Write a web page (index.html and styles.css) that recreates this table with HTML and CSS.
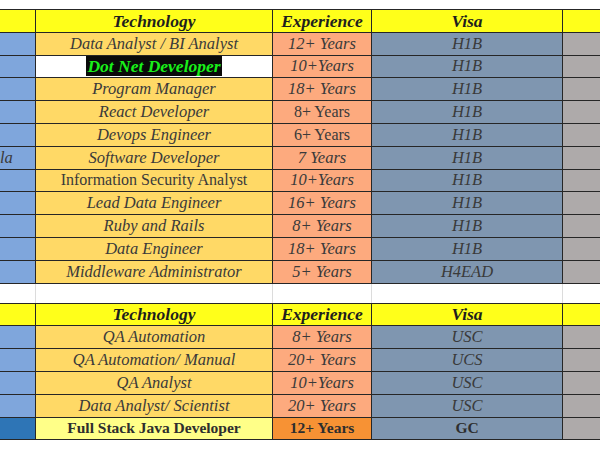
FILE: index.html
```html
<!DOCTYPE html>
<html>
<head>
<meta charset="utf-8">
<link rel="stylesheet" href="styles.css">
</head>
<body>
<div class="sheet">
<table class="grid">
  <colgroup>
    <col class="c-loc"><col class="c-tech"><col class="c-exp"><col class="c-visa"><col class="c-last">
  </colgroup>
  <tr class="head"><td></td><td>Technology</td><td>Experience</td><td>Visa</td><td></td></tr>
  <tr><td class="loc"></td><td class="tech">Data Analyst / BI Analyst</td><td class="exp">12+ Years</td><td class="visa">H1B</td><td class="last"></td></tr>
  <tr><td class="loc"></td><td class="tech white"><span class="hl">Dot Net Developer</span></td><td class="exp">10+Years</td><td class="visa">H1B</td><td class="last"></td></tr>
  <tr><td class="loc"></td><td class="tech">Program Manager</td><td class="exp">18+ Years</td><td class="visa">H1B</td><td class="last"></td></tr>
  <tr><td class="loc"></td><td class="tech">React Developer</td><td class="exp up">8+ Years</td><td class="visa">H1B</td><td class="last"></td></tr>
  <tr><td class="loc"></td><td class="tech">Devops Engineer</td><td class="exp up">6+ Years</td><td class="visa">H1B</td><td class="last"></td></tr>
  <tr><td class="loc"><span class="cut">la</span></td><td class="tech">Software Developer</td><td class="exp">7 Years</td><td class="visa">H1B</td><td class="last"></td></tr>
  <tr><td class="loc"></td><td class="tech up">Information Security Analyst</td><td class="exp">10+Years</td><td class="visa">H1B</td><td class="last"></td></tr>
  <tr><td class="loc"></td><td class="tech">Lead Data Engineer</td><td class="exp">16+ Years</td><td class="visa">H1B</td><td class="last"></td></tr>
  <tr><td class="loc"></td><td class="tech">Ruby and Rails</td><td class="exp">8+ Years</td><td class="visa">H1B</td><td class="last"></td></tr>
  <tr><td class="loc"></td><td class="tech">Data Engineer</td><td class="exp">18+ Years</td><td class="visa">H1B</td><td class="last"></td></tr>
  <tr><td class="loc"></td><td class="tech">Middleware Administrator</td><td class="exp">5+ Years</td><td class="visa">H4EAD</td><td class="last"></td></tr>
  <tr class="blank"><td></td><td></td><td></td><td></td><td></td></tr>
  <tr class="head"><td></td><td>Technology</td><td>Experience</td><td>Visa</td><td></td></tr>
  <tr><td class="loc"></td><td class="tech">QA Automation</td><td class="exp">8+ Years</td><td class="visa">USC</td><td class="last"></td></tr>
  <tr><td class="loc"></td><td class="tech">QA Automation/ Manual</td><td class="exp">20+ Years</td><td class="visa">UCS</td><td class="last"></td></tr>
  <tr><td class="loc"></td><td class="tech">QA Analyst</td><td class="exp">10+Years</td><td class="visa">USC</td><td class="last"></td></tr>
  <tr><td class="loc"></td><td class="tech">Data Analyst/ Scientist</td><td class="exp">20+ Years</td><td class="visa">USC</td><td class="last"></td></tr>
  <tr class="strong"><td class="loc dark"></td><td class="tech pale">Full Stack Java Developer</td><td class="exp hot">12+ Years</td><td class="visa">GC</td><td class="last"></td></tr>
</table>
</div>
</body>
</html>
```

FILE: styles.css
```css
html, body {
  margin: 0;
  padding: 0;
  background: #ffffff;
  overflow: hidden;
}
.sheet {
  width: 600px;
  height: 450px;
  overflow: hidden;
  padding-top: 9px;
  box-sizing: border-box;
}
.grid {
  border-collapse: collapse;
  table-layout: fixed;
  width: 622px;
  margin-left: -1px;
  border-top: 1px solid #c8c8c8;
  font-family: "Liberation Serif", serif;
  font-size: 16.5px;
  font-style: italic;
  color: #3a3a3a;
}
.c-loc { width: 36px; }
.c-tech { width: 237px; }
.c-exp { width: 99px; }
.c-visa { width: 191px; }
.c-last { width: 59px; }
.grid td {
  height: 21.8px;
  padding: 0;
  border: 1px solid #262626;
  text-align: center;
  vertical-align: middle;
  white-space: nowrap;
  line-height: 18px;
}
.head td {
  background: #ffff1a;
  font-weight: bold;
  font-size: 17.5px;
  color: #1e1e1e;
}
.blank td {
  height: 19px;
  background: #ffffff;
  border-top: 1px solid #262626;
  border-bottom: 1px solid #262626;
  border-left: 1px solid #dcdcdc;
  border-right: 1px solid #dcdcdc;
}
.loc { background: #7fa6dc; text-align: left !important; }
.tech { background: #ffd966; }
.exp { background: #fdaa7e; }
.visa { background: #7f96b0; }
.last { background: #aeaaaa; }
.up { font-style: normal; font-size: 16px; }
.white { background: #ffffff; }
.hl {
  background: #0a0a0a;
  color: #19f019;
  font-weight: bold;
  font-size: 17.5px;
  padding: 0 1px;
}
.cut {
  display: inline-block;
  margin-left: 0;
}
.strong td { font-style: normal; font-weight: bold; font-size: 15.5px; color: #2e2e2e; }
.dark { background: #2e75b6; }
.pale { background: #ffff88; }
.hot { background: #f79234; }
```
